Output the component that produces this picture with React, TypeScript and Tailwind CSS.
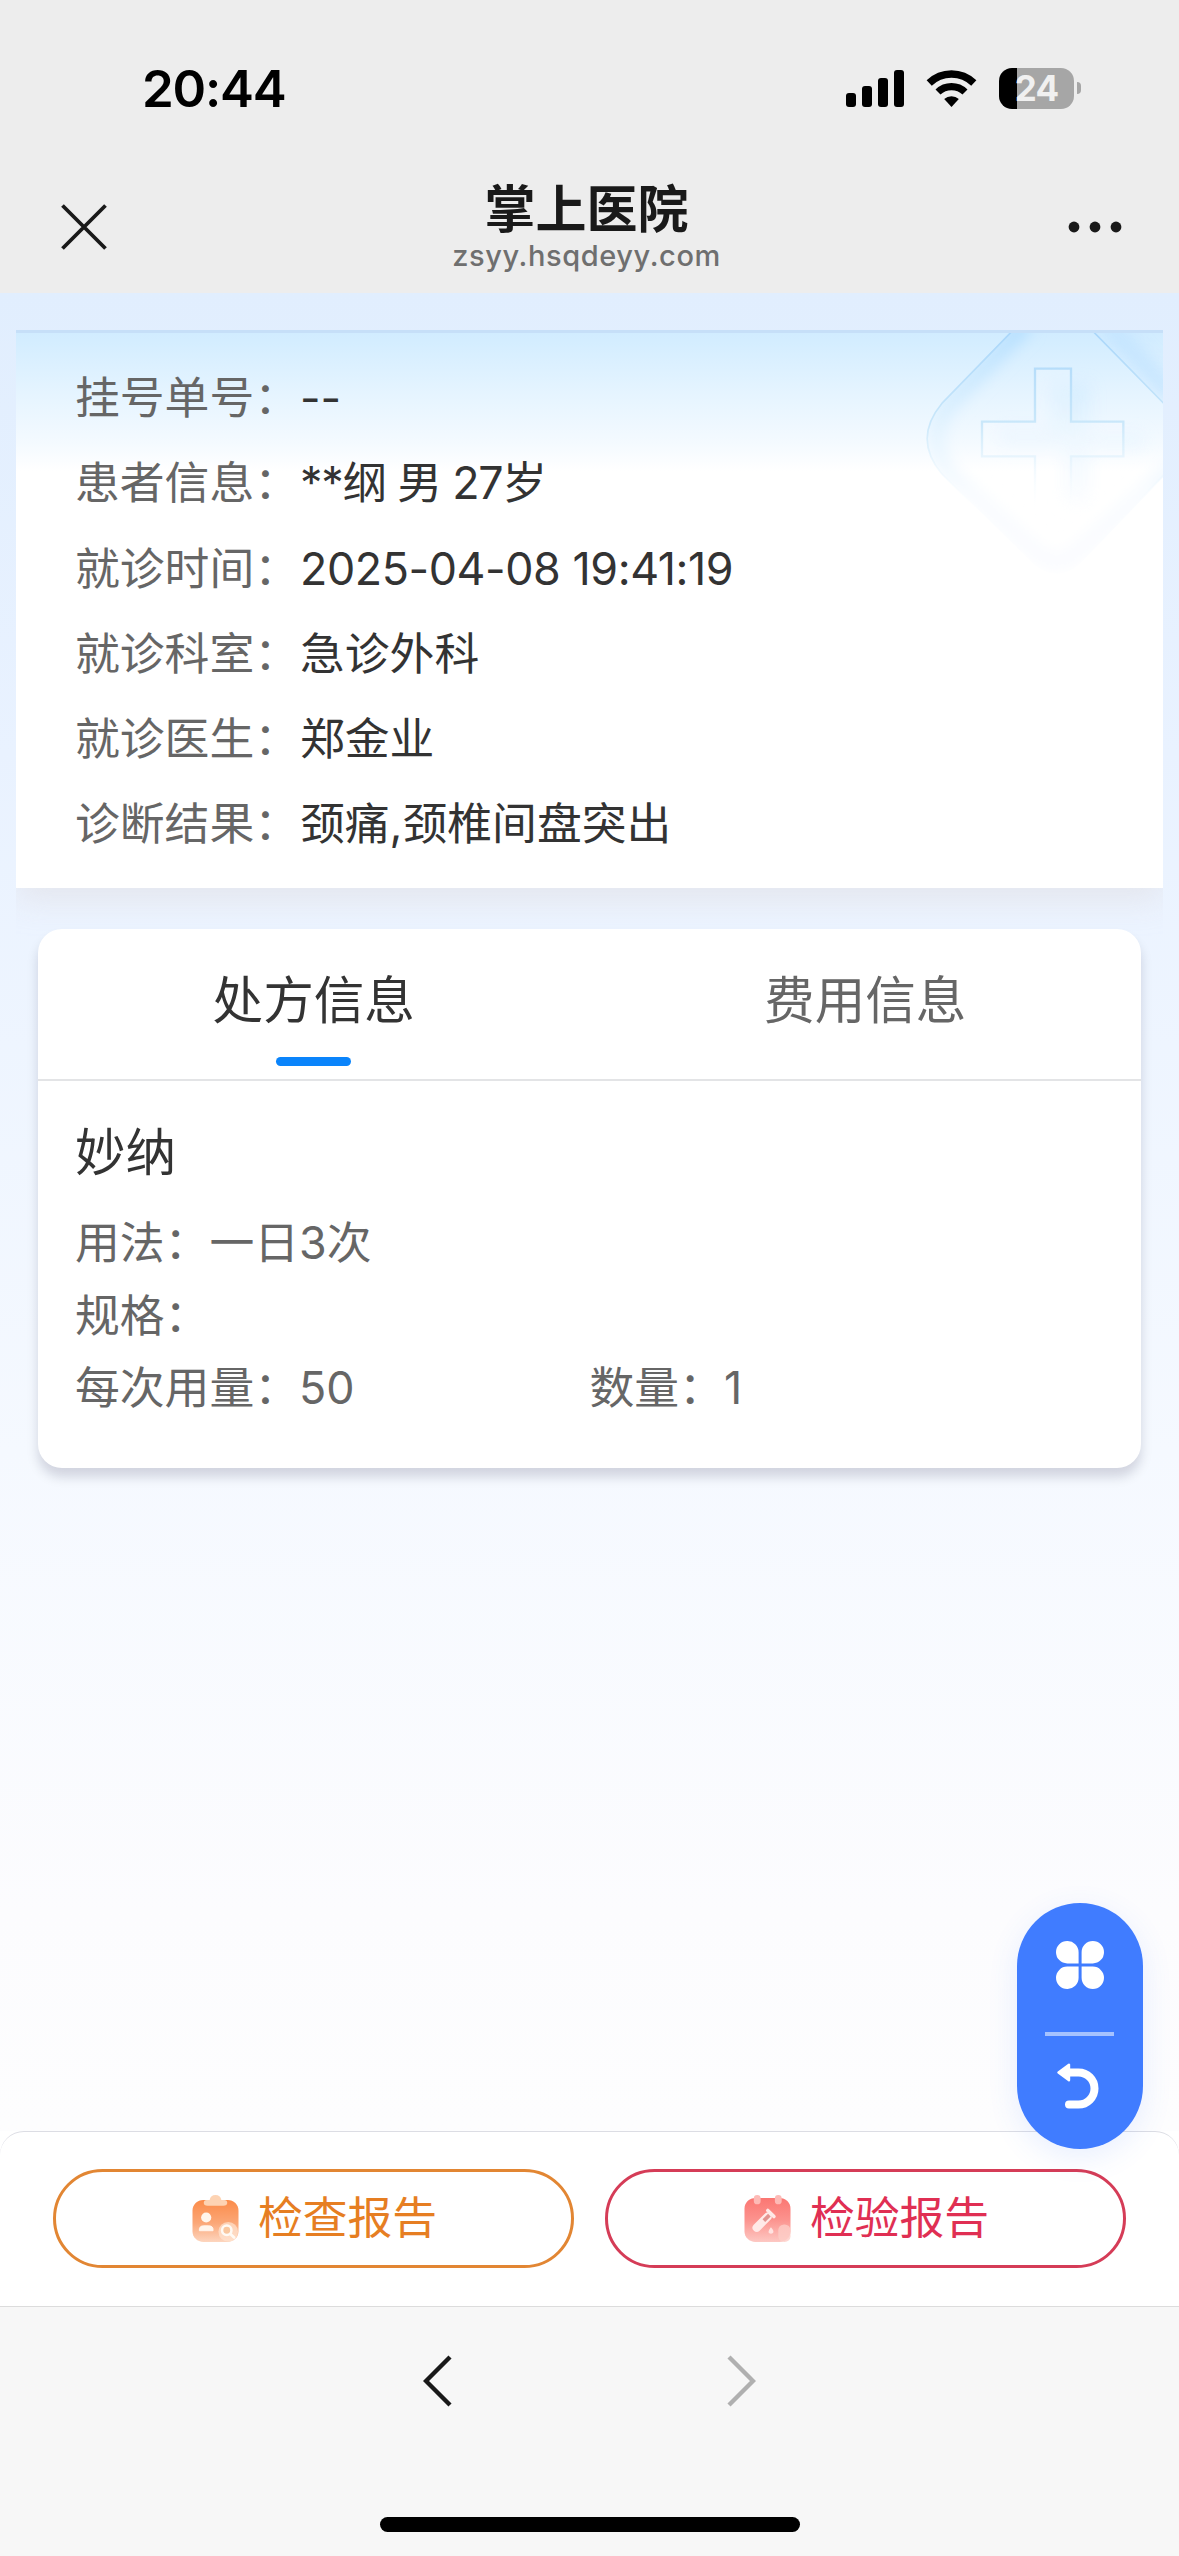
import React from "react";

const visitRows = [
  { label: "挂号单号：", value: "--", tracking: "tracking-normal" },
  { label: "患者信息：", value: "**纲 男 27岁", tracking: "tracking-[-1.25px]" },
  { label: "就诊时间：", value: "2025-04-08 19:41:19", tracking: "tracking-[-0.42px]" },
  { label: "就诊科室：", value: "急诊外科", tracking: "tracking-normal" },
  { label: "就诊医生：", value: "郑金业", tracking: "tracking-normal" },
  { label: "诊断结果：", value: "颈痛,颈椎间盘突出", tracking: "tracking-normal" },
];

function StatusBar() {
  return (
    <div className="flex h-[176px] items-center justify-between pl-[142px] pr-[98px]">
      <span className="text-[51px] font-semibold leading-none tracking-[-1.2px] text-black">20:44</span>
      <div className="flex items-center">
        <svg className="h-[41px] w-[58px]" viewBox="0 0 58 41">
          <rect x="0" y="25" width="10" height="14" rx="3" />
          <rect x="16" y="18" width="10" height="21" rx="3" />
          <rect x="32" y="10" width="10" height="29" rx="3" />
          <rect x="48" y="2" width="10" height="37" rx="3" />
        </svg>
        <svg className="ml-[22px] h-[41px] w-[51px]" viewBox="0 0 51 41" fill="none" stroke="#000">
          <path d="M3.2 15 A32 32 0 0 1 47.8 15" strokeWidth="7.4" />
          <path d="M12 24 A19.5 19.5 0 0 1 39 24" strokeWidth="7.2" />
          <path d="M25.5 39 L18.2 31 A11 11 0 0 1 32.8 31 Z" fill="#000" stroke="none" />
        </svg>
        <div className="ml-[22px] flex h-[41px] w-[75px] items-center justify-center overflow-hidden rounded-[13px] bg-[linear-gradient(to_right,#000_18px,#a6a6a6_18px)] text-[35px] font-bold leading-none tracking-[-0.8px] text-[#f0f0f0]">
          24
        </div>
        <div className="ml-[3px] h-[12px] w-[4px] rounded-r-full bg-[#a6a6a6]" />
      </div>
    </div>
  );
}

function TitleBar() {
  return (
    <div className="flex h-[117px] items-start justify-between pl-[61px] pr-[57px]">
      <svg className="mt-[28px] h-[46px] w-[46px]" viewBox="0 0 46 46" stroke="#191919" strokeWidth="3.8">
        <path d="M1.5 1.5 L44.5 44.5 M44.5 1.5 L1.5 44.5" />
      </svg>
      <div className="flex flex-col items-center pr-[2px]">
        <h1 className="h-[62px] pt-[3px] text-[51px] font-bold leading-[62px] text-[#191919]">掌上医院</h1>
        <p className="text-[29px] font-medium leading-[36px] tracking-[0.6px] text-[#6f6f6f]">zsyy.hsqdeyy.com</p>
      </div>
      <svg className="mt-[45px] h-[12px] w-[54px]" viewBox="0 0 54 12" fill="#191919">
        <circle cx="6" cy="6" r="5.4" />
        <circle cx="27" cy="6" r="5.4" />
        <circle cx="48" cy="6" r="5.4" />
      </svg>
    </div>
  );
}

function CardWatermark() {
  return (
    <svg className="absolute right-0 top-0 h-[250px] w-[240px]" viewBox="189 158 720 750" fill="none">
      <defs>
        <linearGradient id="wmLine" x1="0" y1="150" x2="0" y2="700" gradientUnits="userSpaceOnUse">
          <stop offset="0" stopColor="#a9d6fa" />
          <stop offset="0.5" stopColor="#c9e7fa" />
          <stop offset="1" stopColor="#ffffff" stopOpacity="0" />
        </linearGradient>
        <linearGradient id="wmGlow" x1="0" y1="150" x2="0" y2="900" gradientUnits="userSpaceOnUse">
          <stop offset="0" stopColor="#b3defe" />
          <stop offset="0.4" stopColor="#e2f3fe" />
          <stop offset="0.65" stopColor="#f7fbff" />
          <stop offset="1" stopColor="#fafbfe" />
        </linearGradient>
        <clipPath id="wmDiamond">
          <path d="M455 150 L245 370 Q158 475 245 580 L520 850 Q590 910 660 850 L920 580 V375 L695 150 Z" />
        </clipPath>
        <clipPath id="wmCorner">
          <path d="M695 150 L920 375 V150 Z" />
        </clipPath>
        <filter id="wmBlur" x="-20%" y="-20%" width="140%" height="140%">
          <feGaussianBlur stdDeviation="22" />
        </filter>
      </defs>
      <g clipPath="url(#wmDiamond)">
        <path
          d="M500 130 L270 370 Q190 475 270 580 L540 825 Q590 860 640 825 L940 560"
          stroke="url(#wmGlow)"
          strokeWidth="46"
          filter="url(#wmBlur)"
        />
        <path
          d="M570 310 H690 V460 H850 V500 H690 V670 H610 V500 H420 V440 H570 Z"
          fill="url(#wmGlow)"
          opacity="0.6"
          filter="url(#wmBlur)"
        />
      </g>
      <g clipPath="url(#wmCorner)">
        <path d="M740 130 L940 350" stroke="#bfe2ff" strokeWidth="60" opacity="0.7" filter="url(#wmBlur)" />
      </g>
      <path
        d="M455 154 L245 370 Q158 475 245 580 L400 735 M700 154 L912 370 M912 582 L780 715"
        stroke="url(#wmLine)"
        strokeWidth="5"
      />
      <path
        d="M525 265 H633 V424 H790 V528 H633 V690 H525 V528 H366 V424 H525 Z"
        fill="#ffffff"
        fillOpacity="0.2"
        stroke="url(#wmLine)"
        strokeWidth="7"
      />
    </svg>
  );
}

function VisitCard() {
  return (
    <section className="relative mx-4 h-[558px] border-t-[3px] border-[#c6dff8] bg-[linear-gradient(to_bottom,#d1ecff_0px,#e5f4ff_60px,#f4faff_110px,#ffffff_138px)] pl-[59px] pt-[23px] shadow-[0_12px_30px_0_rgba(225,226,232,0.75)] [clip-path:inset(0_0_-50px_0)]">
      <CardWatermark />
      {visitRows.map((row) => (
        <div key={row.label} className="relative flex h-[85.2px] items-center text-[44.8px] leading-none">
          <span className="w-[225px] shrink-0 whitespace-nowrap text-[#666]">{row.label}</span>
          <span className={`whitespace-nowrap text-[#333] ${row.tracking}`}>{row.value}</span>
        </div>
      ))}
    </section>
  );
}

function PrescriptionCard() {
  return (
    <section className="relative mx-[38px] mt-[41px] h-[539px] rounded-[24px] bg-white shadow-[0_9px_12px_0_rgba(0,0,40,0.15)]">
      <div className="grid h-[152px] grid-cols-2 border-b-2 border-[#e3e4e6] text-[50.6px]">
        <div className="flex flex-col items-center">
          <span className="mt-[36px] h-[72px] leading-[72px] text-[#333]">处方信息</span>
          <span className="mt-[20px] h-[9px] w-[75px] rounded-full bg-[#0a84fb]" />
        </div>
        <div className="flex flex-col items-center">
          <span className="mt-[36px] h-[72px] leading-[72px] text-[#666]">费用信息</span>
        </div>
      </div>
      <div className="px-[37px] pt-[36px] text-[44.8px] text-[#666]">
        <h2 className="h-[72px] text-[50.6px] leading-[72px] text-[#333]">妙纳</h2>
        <p className="mt-[18px] h-[72.5px] leading-[72.5px]">用法：一日3次</p>
        <p className="h-[72.5px] leading-[72.5px]">规格：</p>
        <div className="grid h-[72.5px] grid-cols-2 leading-[72.5px]">
          <span>每次用量：50</span>
          <span>数量：1</span>
        </div>
      </div>
    </section>
  );
}

function FloatingMenu() {
  return (
    <div className="absolute right-[36px] top-[1903px] flex h-[246px] w-[126px] flex-col items-center rounded-full bg-[#407cff] shadow-[0_8px_30px_0_rgba(64,124,255,0.12)]">
      <svg className="mt-[38px] h-[48px] w-[48px]" viewBox="0 0 48 48" fill="#fff">
        <path d="M11.2 0 A11.2 11.2 0 0 1 22.6 11.2 V22.4 H11.2 A11.2 11.2 0 0 1 11.2 0 Z" />
        <path d="M36.8 0 A11.2 11.2 0 0 0 25.6 11.2 V22.4 H36.8 A11.2 11.2 0 0 0 36.8 0 Z" />
        <path d="M11.2 48 A11.2 11.2 0 0 0 22.6 36.8 V25.6 H11.2 A11.2 11.2 0 0 0 11.2 48 Z" />
        <path d="M36.8 48 A11.2 11.2 0 0 1 25.6 36.8 V25.6 H36.8 A11.2 11.2 0 0 1 36.8 48 Z" />
      </svg>
      <div className="mr-[1px] mt-[43px] h-[4px] w-[69px] bg-[#a5c2ff]" />
      <svg className="mr-[4px] mt-[27px] h-[46px] w-[42px]" viewBox="0 0 42 46" fill="none">
        <path d="M12 9.5 H21.5 A16 16 0 0 1 21.5 41.5 H12" stroke="#fff" strokeWidth="8" strokeLinecap="round" />
        <path d="M1.5 9.5 L12 1.8 V17.2 Z" fill="#fff" stroke="#fff" strokeWidth="2.4" strokeLinejoin="round" />
      </svg>
    </div>
  );
}

function ExamIcon() {
  return (
    <svg className="h-[49px] w-[47px]" viewBox="0 0 48 50">
      <defs>
        <linearGradient id="examBody" x1="0" y1="0" x2="0" y2="1">
          <stop offset="0" stopColor="#fb8b49" />
          <stop offset="0.55" stopColor="#fba777" />
          <stop offset="1" stopColor="#fdd5be" />
        </linearGradient>
      </defs>
      <rect x="0.5" y="6" width="47" height="43" rx="11" fill="url(#examBody)" />
      <path d="M12 9 Q12 6 15 6 H18 Q19 1 24 1 Q29 1 30 6 H33 Q36 6 36 9 Q36 12 32 12 H16 Q12 12 12 9 Z" fill="#fdd3b3" />
      <circle cx="14.5" cy="24" r="5.2" fill="#fff5ec" />
      <path d="M7.5 37.5 Q7 32.5 12 32.5 H17 Q22 32.5 21.5 37.5 Z" fill="#fff5ec" stroke="#fff5ec" strokeLinejoin="round" />
      <circle cx="37" cy="38.5" r="10" fill="#ffe4d0" opacity="0.7" />
      <circle cx="35.5" cy="37" r="4.8" fill="#f9c79f" stroke="#fffaf4" strokeWidth="2.6" />
      <path d="M39.5 41 L43 44.5" stroke="#fffaf4" strokeWidth="2.8" strokeLinecap="round" />
    </svg>
  );
}

function LabIcon() {
  return (
    <svg className="h-[49px] w-[47px]" viewBox="0 0 48 50">
      <defs>
        <linearGradient id="labBody" x1="0" y1="0" x2="0" y2="1">
          <stop offset="0" stopColor="#fb7672" />
          <stop offset="0.5" stopColor="#fc938e" />
          <stop offset="1" stopColor="#fdc8c3" />
        </linearGradient>
      </defs>
      <rect x="0.5" y="4" width="47" height="45" rx="11" fill="url(#labBody)" />
      <rect x="10" y="1" width="7" height="9.5" rx="3.5" fill="#fdbab6" />
      <rect x="31.5" y="1" width="7" height="9.5" rx="3.5" fill="#fdbab6" />
      <g transform="rotate(45 19 28)">
        <rect x="15" y="17" width="8.5" height="24" rx="4.2" fill="#ffe9e7" />
        <rect x="13" y="14.5" width="12.5" height="3.6" rx="1.8" fill="#ffe9e7" />
        <rect x="17.4" y="18.5" width="3.8" height="8" fill="#e2938f" />
      </g>
      <path d="M27.5 34 Q31 38 29.8 39.5 Q27.5 41.5 25.2 39.5 Q24.5 38 27.5 34 Z" fill="#ffe3e1" />
      <rect x="35" y="31" width="12.5" height="18" rx="6" fill="#fdcdc7" opacity="0.8" />
    </svg>
  );
}

function ReportActions() {
  return (
    <div className="flex h-[175px] gap-[31px] rounded-t-[24px] border-t-[1.5px] border-[#dcdde4] bg-white px-[53px] pt-[37px] text-[44.8px] leading-none">
      <button className="flex h-[99px] flex-1 items-center justify-center gap-[19px] rounded-full border-[3px] border-[#e28633] pl-[2px] text-[#e67e22]">
        <ExamIcon />
        <span>检查报告</span>
      </button>
      <button className="flex h-[99px] flex-1 items-center justify-center gap-[19px] rounded-full border-[3px] border-[#d53c57] pl-[2px] text-[#e02f53]">
        <LabIcon />
        <span>检验报告</span>
      </button>
    </div>
  );
}

function BrowserBar() {
  return (
    <div className="flex h-[250px] flex-col items-center border-t border-[#dcdcdc] bg-[#f7f7f7]">
      <div className="mt-[48px] flex gap-[275px]">
        <svg className="h-[52px] w-[29px]" viewBox="0 0 29 52" fill="none" stroke="#191919" strokeWidth="4.4">
          <path d="M27 2 L3 26 L27 50" />
        </svg>
        <svg className="h-[52px] w-[29px]" viewBox="0 0 29 52" fill="none" stroke="#b0b0b0" strokeWidth="4.4">
          <path d="M2 2 L26 26 L2 50" />
        </svg>
      </div>
      <div className="mt-[110px] h-[15px] w-[420px] rounded-full bg-black" />
    </div>
  );
}

export default function App() {
  return (
    <div className="relative flex h-[2556px] w-[1179px] flex-col overflow-hidden bg-white font-['Inter','Noto_Sans_CJK_SC',sans-serif]">
      <header className="h-[293px] shrink-0 bg-[#ededed]">
        <StatusBar />
        <TitleBar />
      </header>
      <main className="flex-1 bg-[linear-gradient(to_bottom,#e1eefe_0%,#e9f2ff_25%,#f5f9ff_63%,#fcfcfe_88%,#fdfdfe_100%)] pt-[37px]">
        <VisitCard />
        <PrescriptionCard />
      </main>
      <ReportActions />
      <BrowserBar />
      <FloatingMenu />
    </div>
  );
}
